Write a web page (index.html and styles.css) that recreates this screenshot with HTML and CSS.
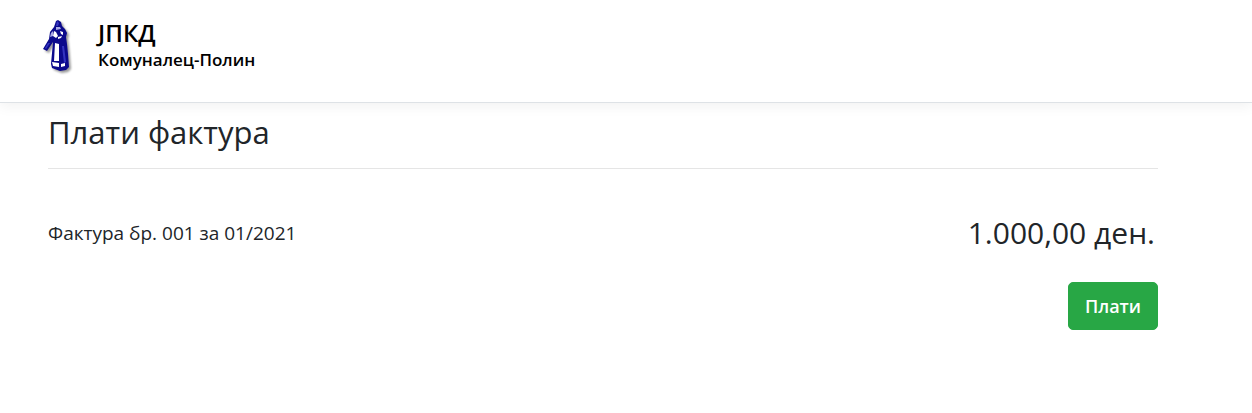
FILE: index.html
```
<!DOCTYPE html>
<html lang="mk">
<head>
<title>Плати фактура</title>
<meta charset="UTF-8">
<meta name="viewport" content="width=device-width, initial-scale=1.0">
<link rel="stylesheet" href="styles.css">
</head>
<body>
<header class="navbar">
<a class="brand" href="#">
<svg class="logo" viewBox="0 0 34 62" aria-hidden="true">
<path fill="#0c0a8c" d="M14 3 L16 2 L19 4 L20 8 L23 11 L25 15 L24 19 L25 26 L26 36 L27 49 L24 52 L18 53 L10 50 L9 46 L11 24 L5 33 L1 31 L7 21 L8 14 L12 9 Z"/>
<path fill="#3434c0" d="M15 3 L17 5 L16 8 L14 8 Z M20 28 L22 28 L24 44 L22 45 Z M6 25 L8 25 L4 31 L3 30 Z"/>
<path fill="#a9a9e6" d="M14 9 L18 9 L19 11 L14 12 Z M9 15 L11 13 L11 18 L8 19 Z"/>
<path fill="#fff" d="M12 13 L14 14 L16 18 L14 20 L11 18 Z M18 13 L21 14 L21 17 L19 16 Z M16 19 L20 18 L19 20 L16 21 Z M13 25 L17 26 L17 43 L12 43 Z M10 44 L17 45 L17 49 L11 48 Z M19 46 L23 45 L23 48 L19 49 Z"/>
</svg>
<span class="brand-text">
<span class="brand-title">ЈПКД</span>
<span class="brand-name">Комуналец-Полин</span>
</span>
</a>
</header>
<main class="container">
<h2 class="title">Плати фактура</h2>
<div class="invoice">
<span class="invoice-name">Фактура бр. 001 за 01/2021</span>
<span class="invoice-amount">1.000,00 ден.</span>
</div>
<div class="actions">
<button class="btn" type="button">Плати</button>
</div>
</main>
</body>
</html>
```
FILE: styles.css
```
body {
    margin: 0;
    font-family: "Trebuchet MS", "Open Sans", "Noto Sans", sans-serif;
    color: #212529;
    background-color: #fff;
}
.navbar {
    padding: 18px 42px 22px;
    border-bottom: 1px solid #dee2e6;
    box-shadow: 0 4px 12px rgba(0, 0, 0, 0.05);
}
.brand {
    display: flex;
    align-items: flex-start;
    gap: 22px;
    color: #000;
    text-decoration: none;
}
.logo {
    width: 34px;
    height: 62px;
    filter: drop-shadow(2px 2px 1px rgba(0, 0, 0, 0.4));
}
.brand-text {
    display: flex;
    flex-direction: column;
    font-weight: 600;
}
.brand-title {
    font-size: 24px;
    line-height: 30px;
}
.brand-name {
    font-size: 17px;
    line-height: 24px;
}
.container {
    padding: 9px 94px 24px 48px;
}
.title {
    margin: 0;
    padding-bottom: 16px;
    border-bottom: 1px solid #e5e5e5;
    font-size: 31px;
    font-weight: 400;
    line-height: 40px;
}
.invoice {
    display: flex;
    align-items: center;
    justify-content: space-between;
    padding: 44px 3px 29px 0;
}
.invoice-name {
    font-size: 19px;
}
.invoice-amount {
    font-size: 30px;
    line-height: 40px;
}
.actions {
    display: flex;
    justify-content: flex-end;
}
.btn {
    padding: 8px 16px;
    border: 1px solid #28a745;
    border-radius: 5px;
    background-color: #28a745;
    color: #fff;
    font-family: inherit;
    font-size: 18px;
    font-weight: 600;
    line-height: 30px;
    cursor: pointer;
}
```
